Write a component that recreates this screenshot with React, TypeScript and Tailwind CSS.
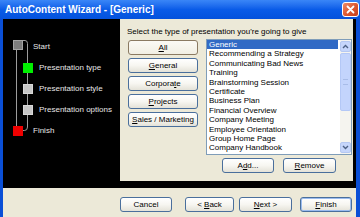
import React from 'react';

const categories = [
  { label: 'All', key: 0, active: true },
  { label: 'General', key: 0 },
  { label: 'Corporate', key: 7 },
  { label: 'Projects', key: 0 },
  { label: 'Sales / Marketing', key: 0 },
];

const presentations = [
  'Generic',
  'Recommending a Strategy',
  'Communicating Bad News',
  'Training',
  'Brainstorming Session',
  'Certificate',
  'Business Plan',
  'Financial Overview',
  'Company Meeting',
  'Employee Orientation',
  'Group Home Page',
  'Company Handbook',
];

const steps = [
  { label: 'Start', left: 30, top: 23 },
  { label: 'Presentation type', left: 36, top: 44 },
  { label: 'Presentation style', left: 36, top: 65 },
  { label: 'Presentation options', left: 36, top: 86 },
  { label: 'Finish', left: 30, top: 107 },
];

// underline one letter, the way Windows marks access keys
const Hotkey: React.FC<{ text: string; at: number }> = ({ text, at }) => (
  <span>
    {text.slice(0, at)}
    <span className="underline underline-offset-1">{text[at]}</span>
    {text.slice(at + 1)}
  </span>
);

const XpButton: React.FC<{ className?: string; active?: boolean; children: React.ReactNode }> = ({
  className = '',
  active,
  children,
}) => (
  <button
    className={`flex h-[15px] items-center justify-center rounded-[3px] border text-[8px] leading-none text-black ${
      active
        ? 'border-[#8a7a62] bg-gradient-to-b from-[#fbfaf5] to-[#f1efe4]'
        : 'border-[#4a6f9c] bg-gradient-to-b from-white via-[#f7f6f1] to-[#e4e2d8]'
    } ${className}`}
  >
    {children}
  </button>
);

const StepDiagram: React.FC = () => (
  <div className="relative w-[117px] shrink-0">
    <svg className="absolute inset-0" width="117" height="169" viewBox="0 0 117 169">
      <path d="M13.5 31 V107" stroke="#9c9c9c" strokeWidth="1" fill="none" />
      <path
        d="M20 21.5 H22 Q24.5 21.5 24.5 24.5 V108 Q24.5 111.5 21.5 111.5 H20"
        stroke="#9c9c9c"
        strokeWidth="1"
        fill="none"
      />
      <rect x="10.5" y="21.5" width="9" height="9" fill="#7d7d7d" stroke="#a4a4a4" />
      <rect x="20" y="44" width="10" height="10" fill="#00f000" />
      <rect x="20.5" y="65.5" width="9" height="9" fill="#c6c6c6" stroke="#d8d8d8" />
      <rect x="20.5" y="86.5" width="9" height="9" fill="#c6c6c6" stroke="#d8d8d8" />
      <rect x="10" y="107" width="10" height="10" fill="#f00000" />
    </svg>
    {steps.map((s) => (
      <span
        key={s.label}
        className="absolute whitespace-nowrap text-[8px] leading-[10px] text-[#e6e6e6]"
        style={{ left: s.left, top: s.top }}
      >
        {s.label}
      </span>
    ))}
  </div>
);

const ListBox: React.FC = () => (
  <div className="flex h-[116px] w-[146px] border border-[#7f9db9] bg-white">
    <ul className="flex-1 pr-[2px]">
      {presentations.map((p, i) => (
        <li
          key={p}
          className={`h-[9.4px] whitespace-nowrap pl-[2px] text-[8px] leading-[9.4px] ${
            i === 0 ? 'bg-[#316ac5] text-white' : 'text-black'
          }`}
        >
          {p}
        </li>
      ))}
    </ul>
    <div className="flex w-[11px] flex-col bg-[#f5f4ef] py-[1px]">
      <div className="flex h-[11px] items-center justify-center rounded-[2px] border border-[#b5c8f2] bg-[#c6d6fb]">
        <svg width="7" height="5" viewBox="0 0 7 5">
          <path d="M1 4 L3.5 1.5 L6 4" stroke="#4d6185" strokeWidth="1.4" fill="none" />
        </svg>
      </div>
      <div className="mt-[1px] flex h-[58px] items-center justify-center rounded-[2px] border border-[#b4c8f6] bg-[#c3d4fc]">
        <div className="h-[6px] w-[5px] border-y border-[#a8bce8]" />
      </div>
      <div className="flex-1" />
      <div className="flex h-[11px] items-center justify-center rounded-[2px] border border-[#b5c8f2] bg-[#c6d6fb]">
        <svg width="7" height="5" viewBox="0 0 7 5">
          <path d="M1 1 L3.5 3.5 L6 1" stroke="#4d6185" strokeWidth="1.4" fill="none" />
        </svg>
      </div>
    </div>
  </div>
);

const App: React.FC = () => {
  return (
    <div
      className="flex h-[217px] w-[360px] flex-col overflow-hidden bg-[#0a4fd6]"
      style={{ fontFamily: '"Liberation Sans", Arial, sans-serif' }}
    >
      {/* title bar */}
      <div className="flex h-[19px] shrink-0 items-center justify-between bg-gradient-to-b from-[#3a86f7] via-[#0a5ce8] to-[#0452dc] pl-[5px] pr-[1px]">
        <span className="text-[10px] font-bold leading-none text-white">AutoContent Wizard - [Generic]</span>
        <div className="flex h-[15px] w-[17px] items-center justify-center rounded-[3px] border border-white bg-gradient-to-br from-[#ec8a66] via-[#dd5a33] to-[#c63d1a]">
          <svg width="9" height="9" viewBox="0 0 9 9">
            <path d="M1.5 1.5 L7.5 7.5 M7.5 1.5 L1.5 7.5" stroke="white" strokeWidth="1.8" strokeLinecap="round" />
          </svg>
        </div>
      </div>

      <div className="ml-[3px] mr-[4px] flex flex-1 flex-col">
        {/* black area with steps and content panel */}
        <div className="flex h-[169px] shrink-0 bg-black">
          <StepDiagram />
          <div className="flex h-[162px] w-[233px] flex-col bg-[#ece9d8] pl-[7px] pt-[8px]">
            <p className="whitespace-nowrap text-[8px] leading-[10px] text-black">
              Select the type of presentation you're going to give
            </p>
            <div className="mt-[2px] flex items-start">
              <div className="ml-[1px] mt-[1px] flex w-[70px] flex-col gap-[3px]">
                {categories.map((c) => (
                  <XpButton key={c.label} active={c.active}>
                    <Hotkey text={c.label} at={c.key} />
                  </XpButton>
                ))}
              </div>
              <div className="ml-[8px] flex flex-col">
                <ListBox />
                <div className="mt-[3px] flex justify-end gap-[9px] pr-[16px]">
                  <XpButton className="w-[52px]">
                    <Hotkey text="Add..." at={1} />
                  </XpButton>
                  <XpButton className="w-[53px]">
                    <Hotkey text="Remove" at={0} />
                  </XpButton>
                </div>
              </div>
            </div>
          </div>
        </div>

        {/* bottom buttons */}
        <div className="flex flex-1 justify-end bg-[#ece9d8] pr-[4px] pt-[9px]">
          <XpButton className="w-[52px]">Cancel</XpButton>
          <XpButton className="ml-[13px] w-[49px]">
            <span>
              &lt; <span className="underline underline-offset-1">B</span>ack
            </span>
          </XpButton>
          <XpButton className="ml-[5px] w-[53px]">
            <span>
              <span className="underline underline-offset-1">N</span>ext &gt;
            </span>
          </XpButton>
          <XpButton className="ml-[8px] w-[52px] shadow-[inset_0_0_0_1px_#9bbcef]">
            <Hotkey text="Finish" at={0} />
          </XpButton>
        </div>
      </div>
    </div>
  );
};

export default App;
